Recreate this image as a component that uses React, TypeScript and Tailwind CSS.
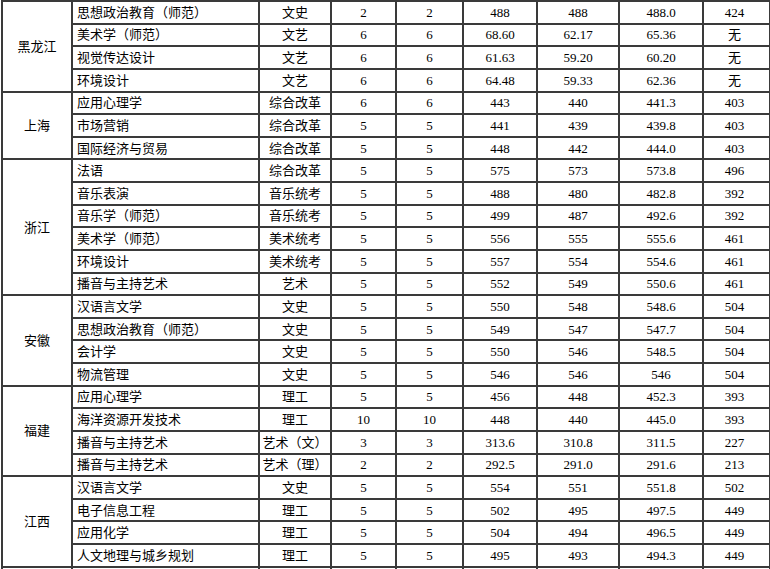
type Row = [string, string, string, string, string, string, string, string]

type Group = {
  province: string
  rows: Row[]
}

const groups: Group[] = [
  {
    province: '黑龙江',
    rows: [
      ['思想政治教育（师范）', '文史', '2', '2', '488', '488', '488.0', '424'],
      ['美术学（师范）', '文艺', '6', '6', '68.60', '62.17', '65.36', '无'],
      ['视觉传达设计', '文艺', '6', '6', '61.63', '59.20', '60.20', '无'],
      ['环境设计', '文艺', '6', '6', '64.48', '59.33', '62.36', '无'],
    ],
  },
  {
    province: '上海',
    rows: [
      ['应用心理学', '综合改革', '6', '6', '443', '440', '441.3', '403'],
      ['市场营销', '综合改革', '5', '5', '441', '439', '439.8', '403'],
      ['国际经济与贸易', '综合改革', '5', '5', '448', '442', '444.0', '403'],
    ],
  },
  {
    province: '浙江',
    rows: [
      ['法语', '综合改革', '5', '5', '575', '573', '573.8', '496'],
      ['音乐表演', '音乐统考', '5', '5', '488', '480', '482.8', '392'],
      ['音乐学（师范）', '音乐统考', '5', '5', '499', '487', '492.6', '392'],
      ['美术学（师范）', '美术统考', '5', '5', '556', '555', '555.6', '461'],
      ['环境设计', '美术统考', '5', '5', '557', '554', '554.6', '461'],
      ['播音与主持艺术', '艺术', '5', '5', '552', '549', '550.6', '461'],
    ],
  },
  {
    province: '安徽',
    rows: [
      ['汉语言文学', '文史', '5', '5', '550', '548', '548.6', '504'],
      ['思想政治教育（师范）', '文史', '5', '5', '549', '547', '547.7', '504'],
      ['会计学', '文史', '5', '5', '550', '546', '548.5', '504'],
      ['物流管理', '文史', '5', '5', '546', '546', '546', '504'],
    ],
  },
  {
    province: '福建',
    rows: [
      ['应用心理学', '理工', '5', '5', '456', '448', '452.3', '393'],
      ['海洋资源开发技术', '理工', '10', '10', '448', '440', '445.0', '393'],
      ['播音与主持艺术', '艺术（文）', '3', '3', '313.6', '310.8', '311.5', '227'],
      ['播音与主持艺术', '艺术（理）', '2', '2', '292.5', '291.0', '291.6', '213'],
    ],
  },
  {
    province: '江西',
    rows: [
      ['汉语言文学', '文史', '5', '5', '554', '551', '551.8', '502'],
      ['电子信息工程', '理工', '5', '5', '502', '495', '497.5', '449'],
      ['应用化学', '理工', '5', '5', '504', '494', '496.5', '449'],
      ['人文地理与城乡规划', '理工', '5', '5', '495', '493', '494.3', '449'],
    ],
  },
]

const cell = 'border-2 border-[#3a3a3a] p-0 h-[22.64px] leading-none'

const App = () => {
  return (
    <div className="w-[770px] h-[569px] overflow-hidden bg-white pl-[1px]">
      <table
        className="border-collapse table-fixed w-[768px] text-[13px] text-black"
        style={{ fontFamily: '"Liberation Serif", "Noto Sans CJK SC", serif' }}
      >
        <colgroup>
          <col className="w-[70px]" />
          <col className="w-[187px]" />
          <col className="w-[72px]" />
          <col className="w-[65px]" />
          <col className="w-[67px]" />
          <col className="w-[74px]" />
          <col className="w-[82px]" />
          <col className="w-[84px]" />
          <col className="w-[67px]" />
        </colgroup>
        <tbody>
          {groups.map((g) =>
            g.rows.map((r, i) => (
              <tr key={g.province + i}>
                {i === 0 && (
                  <td rowSpan={g.rows.length} className={`${cell} text-center align-middle`}>
                    {g.province}
                  </td>
                )}
                <td className={`${cell} text-left pl-[4px] whitespace-nowrap`}>{r[0]}</td>
                <td className={`${cell} text-center whitespace-nowrap`}>{r[1]}</td>
                <td className={`${cell} text-center`}>{r[2]}</td>
                <td className={`${cell} text-center`}>{r[3]}</td>
                <td className={`${cell} text-center`}>{r[4]}</td>
                <td className={`${cell} text-center`}>{r[5]}</td>
                <td className={`${cell} text-center`}>{r[6]}</td>
                <td className={`${cell} text-center pr-[4px]`}>{r[7]}</td>
              </tr>
            ))
          )}
          <tr>
            {Array.from({ length: 9 }).map((_, i) => (
              <td key={i} className={cell}></td>
            ))}
          </tr>
        </tbody>
      </table>
    </div>
  )
}

export default App
